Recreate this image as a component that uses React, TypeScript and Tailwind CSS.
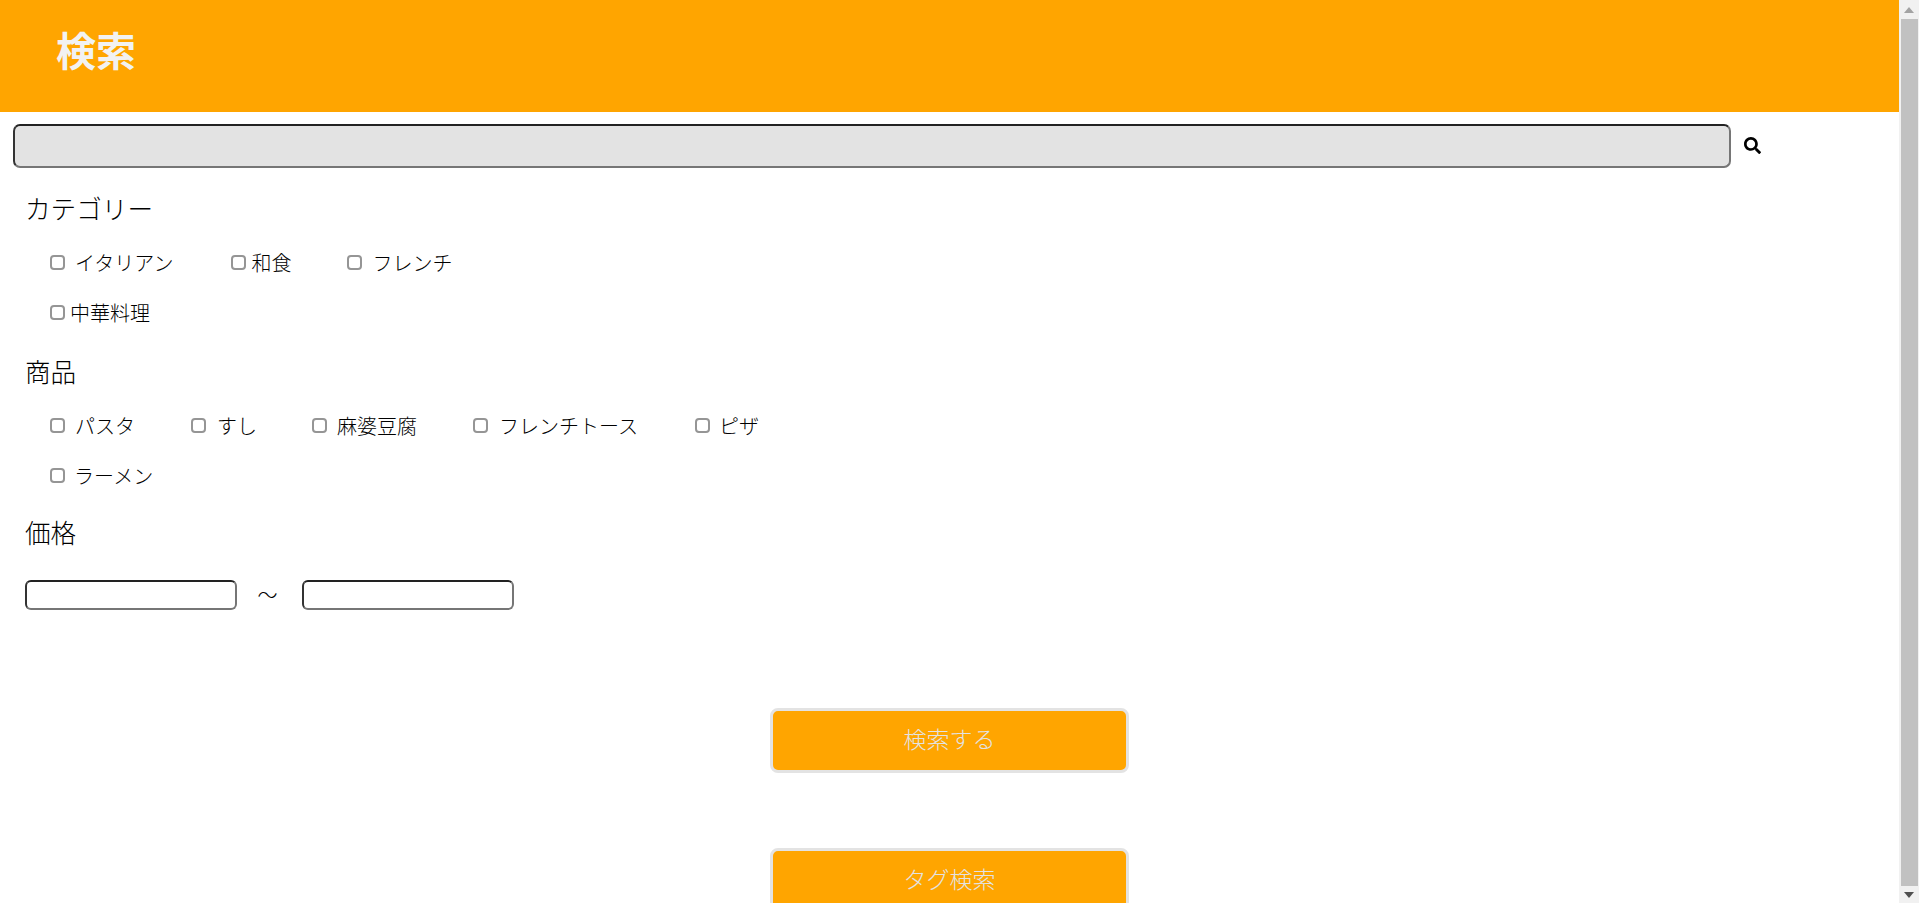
import { FaSearch } from 'react-icons/fa';

const fontStack = "font-['Meiryo','Noto_Sans_CJK_JP',sans-serif]";

function Check({ label, labelGap, className }: { label: string; labelGap: string; className: string }) {
  return (
    <label className={`flex items-center ${labelGap} ${className}`}>
      <input
        type="checkbox"
        className="appearance-none w-[15px] h-[15px] mb-[2px] rounded-[4px] border-2 border-[#959595] bg-white"
      />
      <span className="text-[20px] leading-none font-light">{label}</span>
    </label>
  );
}

function Heading({ children, className }: { children: string; className: string }) {
  return <h2 className={`h-10 pl-[25px] flex items-center text-[25.6px] font-light ${className}`}>{children}</h2>;
}

function PriceInput() {
  return (
    <input
      type="text"
      className="w-[212px] h-[30px] rounded-[6px] border-2 border-t-[#222222] border-l-[#333333] border-r-[#767676] border-b-[#767676] bg-white"
    />
  );
}

function OrangeButton({ children, className }: { children: string; className: string }) {
  return (
    <button className={`block mx-auto w-[359px] h-[65px] shrink-0 pb-[4px] rounded-[8px] border-[3px] border-[#e3e3e3] bg-[#ffa500] text-[23px] font-light text-[#e3e3e3] ${className}`}>
      {children}
    </button>
  );
}

export default function App() {
  return (
    <div className={`flex h-[903px] overflow-hidden bg-white text-black ${fontStack}`}>
      <main className="flex-1 min-w-0 overflow-hidden">
        {/* Header */}
        <header className="h-[112px] bg-[#ffa500] pl-14 flex items-center">
          <h1 className="text-[40px] leading-none font-bold text-[#f2f2f2] pb-[14px]">検索</h1>
        </header>

        {/* Search bar */}
        <div className="mt-3 pl-[13px] flex items-center">
          <input
            type="text"
            className="w-[1718px] h-[44px] rounded-[7px] border-2 border-t-[#222222] border-l-[#333333] border-r-[#767676] border-b-[#767676] bg-[#e3e3e3]"
          />
          <FaSearch className="ml-[13px] mb-[2px] w-[17px] h-[17px] text-black" />
        </div>

        {/* Category */}
        <Heading className="mt-5">カテゴリー</Heading>
        <div className="mt-[10px] pl-[50px] h-[50px] flex items-center">
          <Check label="イタリアン" labelGap="gap-[10px]" className="mr-[58px]" />
          <Check label="和食" labelGap="gap-[5px]" className="mr-[56px]" />
          <Check label="フレンチ" labelGap="gap-[10px]" className="" />
        </div>
        <div className="pl-[50px] h-[50px] flex items-center">
          <Check label="中華料理" labelGap="gap-[5px]" className="" />
        </div>

        {/* Product */}
        <Heading className="mt-[13px]">商品</Heading>
        <div className="mt-[10px] pl-[50px] h-[50px] flex items-center">
          <Check label="パスタ" labelGap="gap-[10px]" className="mr-[56px]" />
          <Check label="すし" labelGap="gap-[11px]" className="mr-[55px]" />
          <Check label="麻婆豆腐" labelGap="gap-[10px]" className="mr-[56px]" />
          <Check label="フレンチトース" labelGap="gap-[11px]" className="mr-[57px]" />
          <Check label="ピザ" labelGap="gap-[9px]" className="" />
        </div>
        <div className="pl-[50px] h-[50px] flex items-center">
          <Check label="ラーメン" labelGap="gap-[9px]" className="" />
        </div>

        {/* Price */}
        <Heading className="mt-[11px]">価格</Heading>
        <div className="mt-7 pl-[25px] flex items-center">
          <PriceInput />
          <span className="w-[65px] pr-[4px] text-center text-[20px] leading-none font-light">～</span>
          <PriceInput />
        </div>

        <OrangeButton className="mt-[98px]">検索する</OrangeButton>
        <OrangeButton className="mt-[75px]">タグ検索</OrangeButton>
      </main>

      {/* Scrollbar as captured in the screenshot */}
      <aside className="w-5 shrink-0 bg-[#f1f1f1] flex flex-col items-center">
        <div className="h-[19px] flex items-center justify-center">
          <svg width="10" height="6" viewBox="0 0 10 6"><path d="M5 0 10 6H0Z" fill="#a3a3a3" /></svg>
        </div>
        <div className="flex-1 w-[17px] bg-[#c1c1c1]" />
        <div className="h-[17px] flex items-center justify-center">
          <svg width="10" height="6" viewBox="0 0 10 6"><path d="M0 0H10L5 6Z" fill="#505050" /></svg>
        </div>
      </aside>
    </div>
  );
}
